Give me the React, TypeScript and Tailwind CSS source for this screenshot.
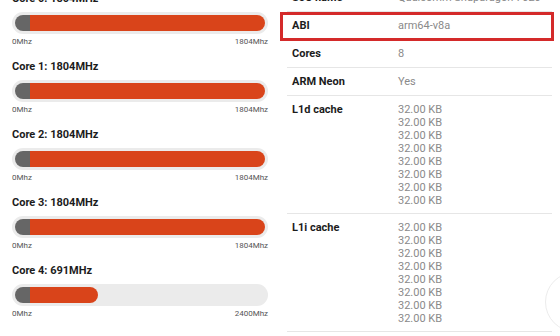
const cores = [
  { name: "Core 0", freq: 1804, max: 1804 },
  { name: "Core 1", freq: 1804, max: 1804 },
  { name: "Core 2", freq: 1804, max: 1804 },
  { name: "Core 3", freq: 1804, max: 1804 },
  { name: "Core 4", freq: 691, max: 2400 },
];

const rows: { label: string; values: string[]; highlight?: boolean }[] = [
  { label: "SoC name", values: ["Qualcomm Snapdragon 7020"] },
  { label: "ABI", values: ["arm64-v8a"], highlight: true },
  { label: "Cores", values: ["8"] },
  { label: "ARM Neon", values: ["Yes"] },
  { label: "L1d cache", values: Array(8).fill("32.00 KB") },
  { label: "L1i cache", values: Array(8).fill("32.00 KB") },
];

const CoreBar = ({ name, freq, max }: { name: string; freq: number; max: number }) => {
  const pct = (freq / max) * 100;
  return (
    <div className="mb-[12px]">
      <div className="text-[11px] leading-[16px] font-bold text-[#1c1c1c]">
        {name}: {freq}MHz
      </div>
      <div className="mt-[5px] h-[22px] rounded-full bg-[#ebebeb] p-[3px]">
        <div className="flex h-[16px]">
          <div className="w-[15px] shrink-0 bg-[#666666] rounded-l-full" />
          {/* orange fill is a share of what's left after the gray head */}
          <div className="flex-1">
            <div className="h-full bg-[#d9441a] rounded-r-full" style={{ width: `${pct}%` }} />
          </div>
        </div>
      </div>
      <div className="mt-[3px] flex justify-between text-[8px] leading-[10px] text-[#555]">
        <span>0Mhz</span>
        <span>{max}Mhz</span>
      </div>
    </div>
  );
};

export default function App() {
  return (
    <div className="relative w-[560px] h-[336px] overflow-hidden bg-white flex font-['Roboto',sans-serif]">
      {/* Frequencies */}
      <div className="w-[280px] shrink-0 px-[12px] mt-[-9px]">
        {cores.map((c) => (
          <CoreBar key={c.name} {...c} />
        ))}
      </div>

      {/* CPU info table */}
      <div className="flex-1 mt-[-16px] ml-[7px] mr-[8px]">
        {rows.map((r) => (
          <div key={r.label} className="relative flex border-b border-[#e6e6e6] pt-[7px] pb-[6px] pl-[5px]">
            <div className="w-[106px] shrink-0 text-[11px] leading-[14px] font-bold text-[#1c1c1c]">{r.label}</div>
            <div className="flex flex-col text-[11px] text-[#8a8a8a]">
              {r.values.map((v, i) => (
                <span key={i} className={r.values.length > 1 ? "leading-[13px]" : "leading-[14px]"}>
                  {v}
                </span>
              ))}
            </div>
            {r.highlight && (
              <div className="absolute left-[-7px] right-[-2px] top-0 bottom-[-2px] border-[3px] border-[#d42a2a]" />
            )}
          </div>
        ))}
      </div>

      {/* floating button edge */}
      <div className="absolute left-[545px] top-[272px] w-[60px] h-[60px] rounded-full border border-[#ececec] bg-white" />
    </div>
  );
}
